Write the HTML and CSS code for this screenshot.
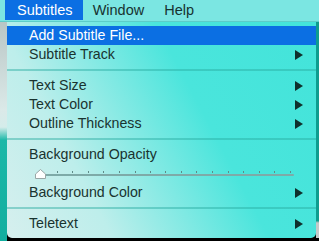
FILE: index.html
```html
<!DOCTYPE html>
<html lang="en">
<head>
    <meta charset="UTF-8">
    <meta name="viewport" content="width=device-width, initial-scale=1.0">
    <title>Subtitles Menu</title>
    <link rel="stylesheet" href="styles.css">
</head>
<body>
    <!-- Top menu bar -->
    <div class="menubar">
        <span class="menubar-item active">Subtitles</span>
        <span class="menubar-item">Window</span>
        <span class="menubar-item">Help</span>
    </div>

    <div class="desk">
        <div class="left-strip"></div>
        <div class="main">
            <div class="panel-row">
                <!-- Dropdown menu -->
                <div class="panel">
                    <div class="item highlighted">Add Subtitle File...</div>
                    <div class="item">Subtitle Track <span class="arrow"></span></div>
                    <div class="separator"></div>
                    <div class="item">Text Size <span class="arrow"></span></div>
                    <div class="item">Text Color <span class="arrow"></span></div>
                    <div class="item">Outline Thickness <span class="arrow"></span></div>
                    <div class="separator"></div>
                    <div class="item">Background Opacity</div>
                    <div class="slider-row">
                        <svg width="309" height="19" viewBox="0 0 309 19">
                            <rect x="29" y="10" width="258" height="2" rx="1" fill="#7eaaa8"/>
                            <g fill="#5f8a87">
                                <rect x="34" y="7" width="1" height="2"/>
                                <rect x="50" y="7" width="1" height="2"/>
                                <rect x="65" y="7" width="1" height="2"/>
                                <rect x="81" y="7" width="1" height="2"/>
                                <rect x="96" y="7" width="1" height="2"/>
                                <rect x="112" y="7" width="1" height="2"/>
                                <rect x="128" y="7" width="1" height="2"/>
                                <rect x="143" y="7" width="1" height="2"/>
                                <rect x="158" y="7" width="1" height="2"/>
                                <rect x="174" y="7" width="1" height="2"/>
                                <rect x="189" y="7" width="1" height="2"/>
                                <rect x="205" y="7" width="1" height="2"/>
                                <rect x="221" y="7" width="1" height="2"/>
                                <rect x="236" y="7" width="1" height="2"/>
                                <rect x="252" y="7" width="1" height="2"/>
                                <rect x="267" y="7" width="1" height="2"/>
                                <rect x="283" y="7" width="1" height="2"/>
                            </g>
                            <polygon points="33.5,5.5 38.5,10 38.5,14.5 28.5,14.5 28.5,10" fill="#ffffff" stroke="#9aa7a6" stroke-width="1"/>
                        </svg>
                    </div>
                    <div class="item">Background Color <span class="arrow"></span></div>
                    <div class="separator"></div>
                    <div class="item">Teletext <span class="arrow"></span></div>
                </div>
                <div class="right-strip"></div>
            </div>
            <div class="bottom-fill"></div>
        </div>
    </div>
</body>
</html>
```

FILE: styles.css
```css
/* Page frame */
body {
    margin: 0;
    width: 319px;
    height: 241px;
    overflow: hidden;
    display: flex;
    flex-direction: column;
    font-family: "Liberation Sans", Arial, sans-serif;
    font-size: 14px;
    color: #19332f;
    background-color: #000;
}

/* Menu bar */
.menubar {
    height: 21px;
    display: flex;
    align-items: stretch;
    padding-left: 5px;
    background-color: #7be6e2;
    border-bottom: 1px solid #5ccdc8;
}
.menubar-item {
    padding: 0 10px;
    line-height: 20px;
    height: 20px;
    font-size: 14.5px;
    color: #173330;
}
.menubar-item.active {
    padding: 0 10px 0 12px;
    background-color: #0b6fe3;
    color: #fff;
}

/* Desktop area under the bar */
.desk {
    flex: 1;
    display: flex;
}
.left-strip {
    width: 7px;
    background: linear-gradient(to bottom, #b9c6c5 0%, #dbe9e8 40%, #d4ecea 48%, #1bb8a8 54%, #12ae9f 100%);
}
.main {
    flex: 1;
    display: flex;
    flex-direction: column;
}
.panel-row {
    display: flex;
}
.right-strip {
    width: 3px;
    background: linear-gradient(to bottom, #0e9d8f 0%, #0e9d8f 92%, #c5c9c9 93%, #c5c9c9 100%);
}
.bottom-fill {
    flex: 1;
    background-color: #000;
}

/* Dropdown panel */
.panel {
    width: 309px;
    height: 216px;
    box-sizing: border-box;
    padding-top: 4px;
    border-bottom-left-radius: 5px;
    border-bottom-right-radius: 5px;
    background: linear-gradient(62deg, #d6efee 0%, #bdeeeb 25%, #7fe9e3 45%, #4ae5dc 62%, #43e4da 100%);
}
.item {
    height: 19px;
    line-height: 19px;
    padding-left: 22px;
    padding-right: 13px;
    display: flex;
    justify-content: space-between;
    align-items: center;
    font-size: 14.2px;
}
.item.highlighted {
    background-color: #0b6fe3;
    color: #fff;
}
.separator {
    height: 12px;
    display: flex;
    align-items: center;
}
.separator::after {
    content: "";
    flex: 1;
    height: 2px;
    background-color: rgba(40, 170, 160, 0.45);
}
.slider-row {
    height: 19px;
}
.slider-row svg {
    display: block;
}

/* Submenu arrow */
.arrow {
    width: 0;
    height: 0;
    border-top: 5px solid transparent;
    border-bottom: 5px solid transparent;
    border-left: 8px solid #0f302c;
}
```
